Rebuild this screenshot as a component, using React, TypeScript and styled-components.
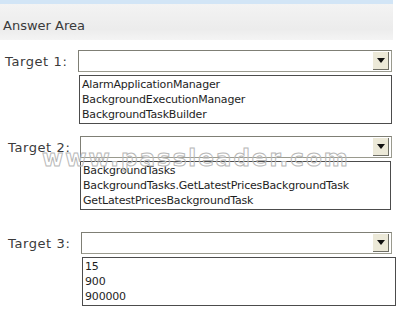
import styled, { createGlobalStyle } from "styled-components";

const GlobalStyle = createGlobalStyle`
  html, body {
    margin: 0;
    padding: 0;
    background: #ffffff;
  }
  body {
    font-family: "DejaVu Sans", Verdana, sans-serif;
    color: #333333;
  }
`;

const Page = styled.div`
  position: relative;
  width: 402px;
  height: 326px;
  overflow: hidden;
  background: #ffffff;
`;

const Header = styled.div`
  width: 393px;
  border-top: 4px solid #d2e5f6;
  height: 40px;
  box-sizing: border-box;
  padding: 14px 0 0 3px;
  background: linear-gradient(#f3f3f3, #ececec 70%, #f4f4f4);
  font-size: 13px;
  color: #3a3a3a;
`;

const Fields = styled.div`
  display: flex;
  flex-direction: column;
`;

const Field = styled.div<{ $top: number }>`
  display: flex;
  flex-direction: column;
  margin-top: ${({ $top }) => $top}px;
`;

const Row = styled.div`
  display: flex;
  align-items: center;
`;

const Label = styled.span<{ $indent: number }>`
  width: ${({ $indent }) => 78 - $indent}px;
  padding-left: ${({ $indent }) => $indent}px;
  font-size: 13px;
  color: #3a3a3a;
  letter-spacing: 0.6px;
`;

const Select = styled.div<{ $shift: number }>`
  margin-left: ${({ $shift }) => $shift}px;
  width: ${({ $shift }) => 314 - $shift}px;
  height: 22px;
  box-sizing: border-box;
  border: 1px solid #9a9a8e;
  border-top-color: #7f7f75;
  border-left-color: #7f7f75;
  background: #ffffff;
  display: flex;
  justify-content: flex-end;
  align-items: center;
  padding-right: 2px;
`;

const Arrow = styled.div`
  width: 16px;
  height: 18px;
  box-sizing: border-box;
  background: #ece9d8;
  border-right: 1px solid #6f6f66;
  border-bottom: 1px solid #6f6f66;
  display: flex;
  align-items: center;
  justify-content: center;
`;

const List = styled.div<{ $left: number; $width: number }>`
  margin-left: ${({ $left }) => $left}px;
  margin-top: 3px;
  width: ${({ $width }) => $width}px;
  box-sizing: border-box;
  border: 1px solid #4c4c4c;
  padding: 1px 2px;
  background: #ffffff;
`;

const Item = styled.div`
  font-family: "DejaVu Sans", Verdana, sans-serif;
  font-size: 11px;
  line-height: 15px;
  letter-spacing: -0.18px;
  color: #1e1e1e;
  white-space: nowrap;
`;

const Watermark = styled.div`
  position: absolute;
  left: 42px;
  top: 145px;
  font-family: "DejaVu Sans", Verdana, sans-serif;
  font-weight: bold;
  font-size: 23px;
  letter-spacing: 2px;
  color: transparent;
  -webkit-text-stroke: 1px #b8b8b8;
  pointer-events: none;
`;

type Target = {
  label: string;
  top: number;
  indent: number;
  shift: number;
  listLeft: number;
  listWidth: number;
  options: string[];
};

const targets: Target[] = [
  {
    label: "Target 1:",
    top: 10,
    indent: 5,
    shift: 0,
    listLeft: 79,
    listWidth: 313,
    options: ["AlarmApplicationManager", "BackgroundExecutionManager", "BackgroundTaskBuilder"],
  },
  {
    label: "Target 2:",
    top: 12,
    indent: 8,
    shift: 2,
    listLeft: 80,
    listWidth: 311,
    options: [
      "BackgroundTasks",
      "BackgroundTasks.GetLatestPricesBackgroundTask",
      "GetLatestPricesBackgroundTask",
    ],
  },
  {
    label: "Target 3:",
    top: 22,
    indent: 8,
    shift: 3,
    listLeft: 82,
    listWidth: 314,
    options: ["15", "900", "900000"],
  },
];

const DropArrow = () => (
  <svg width="8" height="5" viewBox="0 0 8 5">
    <path d="M0 0h8L4 5z" fill="#111" />
  </svg>
);

const App = () => {
  return (
    <Page>
      <GlobalStyle />
      <Header>Answer Area</Header>
      <Fields>
        {targets.map((t) => (
          <Field key={t.label} $top={t.top}>
            <Row>
              <Label $indent={t.indent}>{t.label}</Label>
              <Select $shift={t.shift}>
                <Arrow>
                  <DropArrow />
                </Arrow>
              </Select>
            </Row>
            <List $left={t.listLeft} $width={t.listWidth}>
              {t.options.map((o) => (
                <Item key={o}>{o}</Item>
              ))}
            </List>
          </Field>
        ))}
      </Fields>
      <Watermark>www.passleader.com</Watermark>
    </Page>
  );
};

export default App;
